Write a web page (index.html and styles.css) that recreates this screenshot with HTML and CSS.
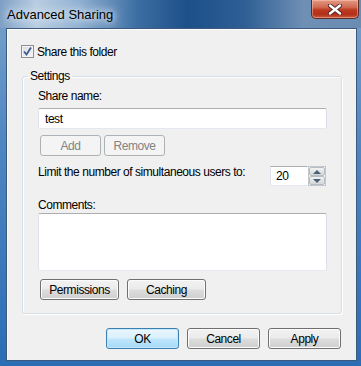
FILE: index.html
```html
<!DOCTYPE html>
<html lang="en">
<head>
    <meta charset="UTF-8">
    <title>Advanced Sharing</title>
    <link rel="stylesheet" href="styles.css">
</head>
<body>
    <div class="window">
        <div class="titlebar">
            <span class="title">Advanced Sharing</span>
            <button class="close-btn" title="Close">
                <svg width="16" height="11" viewBox="0 0 16 11">
                    <path d="M3 1.5 L13 9.5 M13 1.5 L3 9.5" stroke="#4a2626" stroke-width="4.2" stroke-linecap="round"/>
                    <path d="M3 1.5 L13 9.5 M13 1.5 L3 9.5" stroke="#ffffff" stroke-width="2.4" stroke-linecap="round"/>
                </svg>
            </button>
        </div>

        <div class="client">
            <label class="check-row">
                <span class="checkbox">
                    <svg width="11" height="11" viewBox="0 0 11 11">
                        <path d="M2 5.5 L4.5 8.5 L9 1.5" fill="none" stroke="#3d5a98" stroke-width="1.8"/>
                    </svg>
                </span>
                Share this folder
            </label>

            <fieldset class="group">
                <legend>Settings</legend>
                <div class="group-body">
                    <div class="field-label">Share name:</div>
                    <div class="textbox">test</div>

                    <div class="btn-row small-gap">
                        <button class="btn btn-narrow" disabled>Add</button>
                        <button class="btn btn-narrow" disabled>Remove</button>
                    </div>

                    <div class="limit-row">
                        <span class="limit-text">Limit the number of simultaneous users to:</span>
                        <div class="spinner">
                            <div class="spin-value">20</div>
                            <div class="spin-btns">
                                <span class="spin-btn"><span class="arrow-up"></span></span>
                                <span class="spin-btn"><span class="arrow-down"></span></span>
                            </div>
                        </div>
                    </div>

                    <div class="field-label comments-label">Comments:</div>
                    <div class="textbox textarea"></div>

                    <div class="btn-row">
                        <button class="btn btn-wide">Permissions</button>
                        <button class="btn btn-wide">Caching</button>
                    </div>
                </div>
            </fieldset>

            <div class="dialog-buttons">
                <button class="btn btn-dialog btn-default">OK</button>
                <button class="btn btn-dialog">Cancel</button>
                <button class="btn btn-dialog">Apply</button>
            </div>
        </div>
    </div>
</body>
</html>
```

FILE: styles.css
```css
        * {
            box-sizing: border-box;
        }

        body {
            margin: 0;
            font-family: 'Liberation Sans', Arial, sans-serif;
            font-size: 12px;
            letter-spacing: -0.45px;
            color: #000;
            background: #fff;
        }

        .window {
            width: 361px;
            height: 366px;
            padding: 0 4px 5px 6px;
            display: flex;
            flex-direction: column;
            background:
                linear-gradient(to right, #7d9fc4 0%, #b9cde2 10%, #8fb0d2 22%, #3d6ea3 38%, #1d4f88 52%, #2f5f95 68%, #6f8fb4 84%, #6a8cb3 100%) top / 100% 28px no-repeat,
                linear-gradient(to bottom, #7aa2cb 0%, #4d86c2 40%, #2b6db5 100%);
        }

        .titlebar {
            height: 28px;
            display: flex;
            justify-content: space-between;
            align-items: flex-start;
        }

        .title {
            padding: 7px 0 0 1px;
            font-size: 13px;
            letter-spacing: 0;
            color: #000;
            text-shadow: 0 0 6px #dbe6f1, 0 0 10px #dbe6f1, 0 0 14px #dbe6f1;
        }

        .close-btn {
            width: 48px;
            height: 19px;
            margin-right: -2px;
            padding: 0;
            border: 1px solid #5b2a2a;
            border-top: none;
            border-radius: 0 0 5px 5px;
            background: linear-gradient(to bottom, #e49a84 0%, #d06a52 40%, #bb3a20 55%, #b23018 80%, #cc5a3e 100%);
            box-shadow: inset 0 0 0 1px rgba(255, 210, 190, 0.45);
            display: flex;
            align-items: center;
            justify-content: center;
        }

        .client {
            flex: 1;
            background: #f0f0f0;
            border: 1px solid #3c5a7c;
            box-shadow: inset 0 1px 0 #ffffff, inset 1px 0 0 #fbfbfb;
            display: flex;
            flex-direction: column;
        }

        .check-row {
            display: flex;
            align-items: center;
            gap: 3px;
            height: 13px;
            margin: 16px 0 0 14px;
        }

        .checkbox {
            width: 13px;
            height: 13px;
            border: 1px solid #8e8f8f;
            background: linear-gradient(135deg, #dcdcdc 0%, #f6f6f6 100%);
            box-shadow: inset 0 0 0 1px #f4f4f4;
            display: flex;
            align-items: center;
            justify-content: center;
        }

        .group {
            width: 320px;
            margin: 11px 0 0 15px;
            padding: 5px 0 13px 5px;
            border: 1px solid #d5dfe5;
            border-radius: 3px;
            box-shadow: inset 1px 1px 0 #ffffff, 1px 1px 0 #ffffff;
            min-inline-size: 0;
        }

        .group legend {
            padding: 0 2px;
            line-height: 15px;
        }

        .group-body {
            padding-left: 10px;
        }

        .field-label {
            line-height: 15px;
        }

        .textbox {
            width: 289px;
            height: 21px;
            margin-top: 4px;
            padding: 3px 6px;
            background: #fff;
            border: 1px solid;
            border-color: #abadb3 #dbdfe6 #e3e9ef #e2e3ea;
            border-radius: 2px;
            line-height: 14px;
        }

        .textarea {
            height: 58px;
            margin-top: 0;
        }

        .btn-row {
            display: flex;
            gap: 8px;
            margin: 8px 0 0 2px;
        }

        .btn-row.small-gap {
            gap: 3px;
            margin-top: 6px;
        }

        .btn {
            height: 21px;
            padding: 0;
            font-family: inherit;
            font-size: 12px;
            letter-spacing: inherit;
            color: #000;
            border: 1px solid #707070;
            border-radius: 3px;
            background: linear-gradient(to bottom, #f2f2f2 0%, #ebebeb 48%, #dddddd 52%, #cfcfcf 100%);
            box-shadow: inset 0 0 0 1px #fcfcfc;
        }

        .btn:disabled {
            color: #838383;
            border-color: #adb2b5;
            background: #f4f4f4;
            box-shadow: none;
        }

        .btn-narrow {
            width: 61px;
        }

        .btn-wide {
            width: 79px;
        }

        .limit-row {
            display: flex;
            justify-content: space-between;
            align-items: flex-start;
            width: 288px;
            margin-top: 10px;
        }

        .limit-text {
            line-height: 15px;
            margin-top: -1px;
        }

        .spinner {
            display: flex;
            height: 20px;
        }

        .spin-value {
            width: 38px;
            padding: 2px 0 0 5px;
            background: #fff;
            border: 1px solid;
            border-color: #abadb3 transparent #e3e9ef #e2e3ea;
            line-height: 15px;
        }

        .spin-btns {
            width: 18px;
            display: flex;
            flex-direction: column;
            border: 1px solid #c2c7ce;
            background: #fff;
        }

        .spin-btn {
            flex: 1;
            display: flex;
            align-items: center;
            justify-content: center;
            border: 1px solid #b5bdc6;
            border-radius: 2px;
            background: linear-gradient(to bottom, #f3f3f3 0%, #e3e3e3 50%, #d6d6d6 100%);
        }

        .arrow-up {
            width: 0;
            height: 0;
            border-left: 4px solid transparent;
            border-right: 4px solid transparent;
            border-bottom: 4px solid #4c607a;
        }

        .arrow-down {
            width: 0;
            height: 0;
            border-left: 4px solid transparent;
            border-right: 4px solid transparent;
            border-top: 4px solid #4c607a;
        }

        .comments-label {
            margin-top: 12px;
        }

        .dialog-buttons {
            display: flex;
            justify-content: flex-end;
            gap: 8px;
            margin: 14px 15px 0 0;
        }

        .btn-dialog {
            width: 73px;
        }

        .btn-default {
            border-color: #3c7fb1;
            background: linear-gradient(to bottom, #eaf6fd 0%, #d9f0fc 48%, #bee6fd 52%, #a7d9f5 100%);
            box-shadow: inset 0 0 0 1px #c4e9fc;
        }
```
